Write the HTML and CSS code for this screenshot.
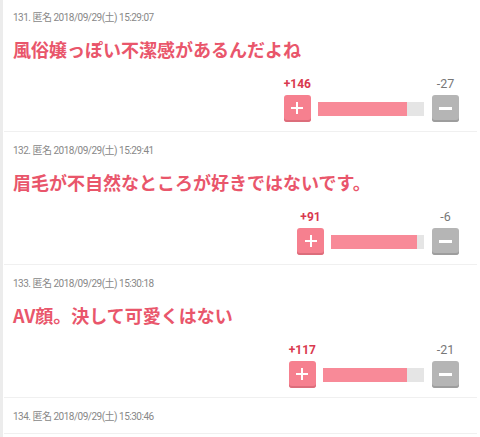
FILE: index.html
```html
<!DOCTYPE html>
<html lang="ja">
<head>
<meta charset="utf-8">
<link rel="stylesheet" href="styles.css">
</head>
<body>
<div class="thread">
  <div class="post first">
    <div class="meta">131. 匿名 2018/09/29(土) 15:29:07</div>
    <div class="title">風俗嬢っぽい不潔感があるんだよね</div>
    <div class="vote">
      <div class="col">
        <span class="count plus-count">+146</span>
        <span class="btn btn-plus"><span class="icon-plus"></span></span>
      </div>
      <div class="bar" style="width:106px"><div class="fill" style="width:84%"></div></div>
      <div class="col">
        <span class="count minus-count">-27</span>
        <span class="btn btn-minus"><span class="icon-minus"></span></span>
      </div>
    </div>
  </div>
  <div class="post">
    <div class="meta">132. 匿名 2018/09/29(土) 15:29:41</div>
    <div class="title">眉毛が不自然なところが好きではないです。</div>
    <div class="vote">
      <div class="col">
        <span class="count plus-count">+91</span>
        <span class="btn btn-plus"><span class="icon-plus"></span></span>
      </div>
      <div class="bar" style="width:93px"><div class="fill" style="width:93%"></div></div>
      <div class="col">
        <span class="count minus-count">-6</span>
        <span class="btn btn-minus"><span class="icon-minus"></span></span>
      </div>
    </div>
  </div>
  <div class="post">
    <div class="meta">133. 匿名 2018/09/29(土) 15:30:18</div>
    <div class="title">AV顔。決して可愛くはない</div>
    <div class="vote">
      <div class="col">
        <span class="count plus-count">+117</span>
        <span class="btn btn-plus"><span class="icon-plus"></span></span>
      </div>
      <div class="bar" style="width:101px"><div class="fill" style="width:83%"></div></div>
      <div class="col">
        <span class="count minus-count">-21</span>
        <span class="btn btn-minus"><span class="icon-minus"></span></span>
      </div>
    </div>
  </div>
  <div class="post">
    <div class="meta">134. 匿名 2018/09/29(土) 15:30:46</div>
  </div>
</div>
</body>
</html>
```

FILE: styles.css
```css
html, body {
  margin: 0;
  padding: 0;
  background: #fff;
}
body {
  font-family: Roboto, "Noto Sans CJK JP", sans-serif;
  width: 480px;
  height: 437px;
  overflow: hidden;
}
.thread {
  border-left: 3px solid #ececec;
  padding-left: 1px;
  padding-right: 3px;
  min-height: 437px;
  box-sizing: border-box;
}
.post {
  padding: 12px 18px 9px 9px;
  border-bottom: 1px solid #f0f0f0;
}
.post.first {
  padding-top: 11px;
}
.meta {
  font-size: 10px;
  letter-spacing: -0.5px;
  line-height: 14px;
  color: #888;
  font-family: Roboto, "Noto Sans CJK JP", sans-serif;
}
.title {
  margin-top: 11px;
  font-family: "Noto Sans CJK JP", sans-serif;
  font-weight: 700;
  font-size: 18px;
  line-height: 26px;
  color: #e9566b;
}
.vote {
  margin-top: 15px;
  display: flex;
  justify-content: flex-end;
  align-items: flex-end;
}
.col {
  display: flex;
  flex-direction: column;
  align-items: center;
}
.count {
  font-size: 12px;
  line-height: 14px;
  margin-bottom: 4px;
}
.plus-count {
  color: #d9394f;
  font-weight: 700;
}
.minus-count {
  color: #777;
  font-size: 12.5px;
}
.btn {
  width: 27px;
  height: 27px;
  border-radius: 3px;
  display: flex;
  align-items: center;
  justify-content: center;
  box-sizing: border-box;
}
.btn-plus {
  background: #f6808f;
  box-shadow: inset 0 -2px 0 #dc6d7b;
}
.btn-minus {
  background: #b5b5b5;
  box-shadow: inset 0 -2px 0 #9d9d9d;
}
.icon-plus {
  position: relative;
  width: 12px;
  height: 12px;
  margin-top: -1px;
}
.icon-plus::before,
.icon-plus::after {
  content: "";
  position: absolute;
  background: #fff;
}
.icon-plus::before {
  left: 0;
  top: 5px;
  width: 12px;
  height: 2px;
}
.icon-plus::after {
  left: 5px;
  top: 0;
  width: 2px;
  height: 12px;
}
.icon-minus {
  width: 13px;
  height: 3px;
  background: #fff;
  margin-top: -1px;
}
.bar {
  height: 14px;
  background: #e5e5e5;
  margin: 0 8px 6px 7px;
  display: flex;
}
.fill {
  height: 100%;
  background: #f88a98;
}
```
